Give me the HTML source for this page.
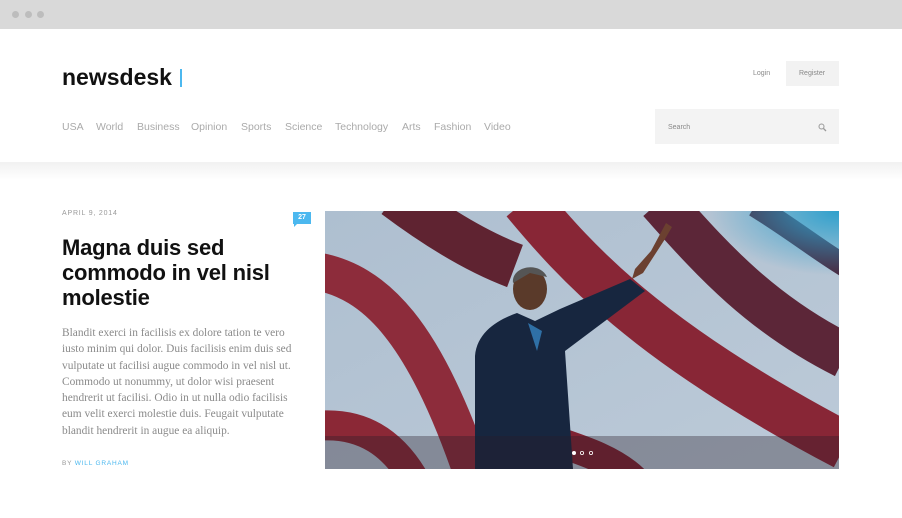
<!DOCTYPE html>
<html><head><style>
*{margin:0;padding:0;box-sizing:border-box}
body{width:902px;height:518px;background:#fff;font-family:"Liberation Sans",sans-serif;position:relative;overflow:hidden}
.top{position:absolute;left:0;top:0;width:902px;height:29px;background:#d9d9d9}
.dot{position:absolute;top:11px;width:7px;height:7px;border-radius:50%;background:#bdbdbd}
.hdr{position:absolute;top:29px;left:0;width:902px;height:133px;background:#fff}
.shadow{position:absolute;top:162px;left:0;width:902px;height:18px;background:linear-gradient(#f1f1f1,#fff)}
.logo{position:absolute;left:62px;top:64px;font-size:23px;font-weight:bold;color:#111;letter-spacing:0px}
.bar{position:absolute;left:180px;top:69px;width:2px;height:18px;background:#4cb8ef}
.nav{position:absolute;top:121px;font-size:10.5px;color:#aaa}
.a{position:absolute;font-size:7px;color:#888}
</style></head><body>
<div class="top"></div>
<div class="dot" style="left:12px"></div><div class="dot" style="left:25px"></div><div class="dot" style="left:37px"></div>
<div class="hdr"></div>
<div class="shadow"></div>
<div class="logo">newsdesk</div><div class="bar"></div>
<div class="nav" style="left:62px">USA</div>
<div class="nav" style="left:96px">World</div>
<div class="nav" style="left:137px">Business</div>
<div class="nav" style="left:191px">Opinion</div>
<div class="nav" style="left:241px">Sports</div>
<div class="nav" style="left:285px">Science</div>
<div class="nav" style="left:335px">Technology</div>
<div class="nav" style="left:402px">Arts</div>
<div class="nav" style="left:434px">Fashion</div>
<div class="nav" style="left:484px">Video</div>
<div class="a" style="left:753px;top:70px">Login</div>
<div style="position:absolute;left:786px;top:61px;width:53px;height:25px;background:#f2f2f2"></div>
<div class="a" style="left:799px;top:70px">Register</div>
<div style="position:absolute;left:655px;top:109px;width:184px;height:35px;background:#f3f3f3"></div>
<div class="a" style="left:668px;top:124px">Search</div>
<svg style="position:absolute;left:818px;top:123px" width="9" height="9"><circle cx="3.5" cy="3.5" r="2.5" fill="none" stroke="#999" stroke-width="1"/><line x1="5.5" y1="5.5" x2="8" y2="8" stroke="#999" stroke-width="1.3"/></svg>
<div style="position:absolute;left:62px;top:210px;font-size:7px;letter-spacing:0.8px;color:#999">APRIL 9, 2014</div>
<div style="position:absolute;left:293px;top:212px;width:18px;height:12px;background:#4cb8ef;color:#fff;font-size:7px;font-weight:bold;text-align:center;line-height:12px">27</div>
<div style="position:absolute;left:294px;top:223px;width:0;height:0;border-top:4px solid #4cb8ef;border-right:4px solid transparent"></div>
<div style="position:absolute;left:62px;top:235px;width:240px;font-size:22px;line-height:25px;font-weight:bold;color:#111;letter-spacing:-0.2px">Magna duis sed commodo in vel nisl molestie</div>
<div style="position:absolute;left:62px;top:325px;width:245px;font-family:'Liberation Serif',serif;font-size:11.4px;line-height:16.3px;color:#8a8a8a">Blandit exerci in facilisis ex dolore tation te vero iusto minim qui dolor. Duis facilisis enim duis sed vulputate ut facilisi augue commodo in vel nisl ut. Commodo ut nonummy, ut dolor wisi praesent hendrerit ut facilisi. Odio in ut nulla odio facilisis eum velit exerci molestie duis. Feugait vulputate blandit hendrerit in augue ea aliquip.</div>
<div style="position:absolute;left:62px;top:460px;font-size:6.5px;letter-spacing:0.8px;color:#999">BY <span style="color:#4cb8ef">WILL GRAHAM</span></div>
<svg style="position:absolute;left:325px;top:211px" width="514" height="258" viewBox="0 0 514 258">
<defs><linearGradient id="tl" x1="0" y1="0" x2="1" y2="1"><stop offset="0" stop-color="#aebfd0"/><stop offset="1" stop-color="#bccad8"/></linearGradient>
<radialGradient id="cy" cx="1" cy="0" r="0.25"><stop offset="0" stop-color="#2fa0cc"/><stop offset="1" stop-color="#2fa0cc" stop-opacity="0"/></radialGradient></defs>
<rect width="514" height="258" fill="url(#tl)"/>
<path d="M-10 60 C50 70 100 120 150 270" stroke="#8d2c3b" stroke-width="38" fill="none"/>
<path d="M-10 215 C40 210 70 235 90 270" stroke="#8b2836" stroke-width="30" fill="none"/>
<path d="M70 -15 C110 15 150 40 190 55" stroke="#5f2331" stroke-width="45" fill="none"/>
<path d="M200 -10 C250 50 320 130 520 235" stroke="#882636" stroke-width="48" fill="none"/>
<path d="M335 -10 C380 40 430 100 520 145" stroke="#5c2638" stroke-width="45" fill="none"/>
<path d="M430 -5 C470 20 495 40 520 55" stroke="#4a2a40" stroke-width="22" fill="none"/>
<path d="M230 230 C260 240 290 250 310 270" stroke="#7f2232" stroke-width="30" fill="none"/>
<rect width="514" height="258" fill="url(#cy)"/>
<path d="M150 258 L150 145 C152 120 175 108 192 102 L210 110 L235 98 L305 68 L320 80 L240 140 L248 258 Z" fill="#17263f"/>
<path d="M307 68 L318 62 L340 28 L347 16 L341 12 L326 40 L310 58 Z" fill="#6b4030"/>
<ellipse cx="205" cy="78" rx="17" ry="21" fill="#5a3a2a"/>
<path d="M188 72 C186 55 215 50 222 66 L205 62 Z" fill="#555"/>
<path d="M203 112 L212 140 L217 120 Z" fill="#2f70a6"/>
<rect x="0" y="225" width="514" height="33" fill="rgba(40,30,40,0.35)"/>
<circle cx="249" cy="242" r="2" fill="#fff"/>
<circle cx="257" cy="242" r="1.6" fill="none" stroke="#fff" stroke-width="0.8"/>
<circle cx="266" cy="242" r="1.6" fill="none" stroke="#fff" stroke-width="0.8"/>
</svg>
</body></html>
